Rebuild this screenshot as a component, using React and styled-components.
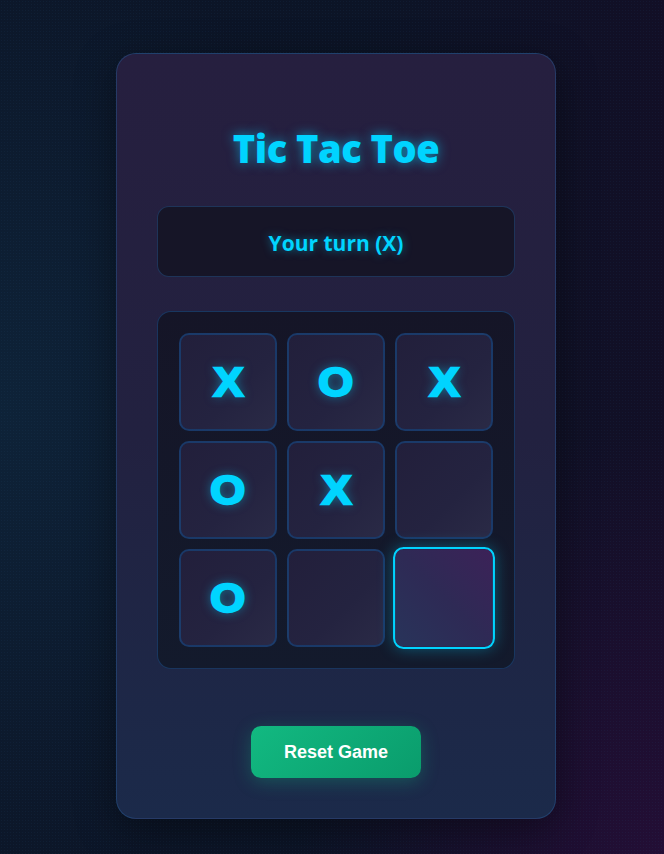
import React from "react";
import styled, { createGlobalStyle } from "styled-components";

const GlobalStyle = createGlobalStyle`
  html, body {
    margin: 0;
    padding: 0;
    min-height: 100%;
  }
  body {
    background:
      radial-gradient(rgba(40, 90, 140, 0.1) 1px, transparent 1px) 0 0 / 3px 3px,
      radial-gradient(ellipse 60% 55% at 0% 48%, rgba(14, 36, 58, 0.9), transparent 100%),
      radial-gradient(ellipse 55% 50% at 100% 100%, rgba(36, 14, 54, 0.95), transparent 100%),
      linear-gradient(90deg, #0c1628 0%, #0c1426 55%, #120f26 100%);
    font-family: "Open Sans", "Noto Sans", sans-serif;
  }
`;

const Page = styled.div`
  min-height: 854px;
  box-sizing: border-box;
  padding: 53px 0 0 8px;
  display: flex;
  justify-content: center;
  align-items: flex-start;
`;

const Card = styled.div`
  width: 440px;
  box-sizing: border-box;
  padding: 40px;
  border-radius: 20px;
  border: 1px solid rgba(40, 90, 150, 0.45);
  background: linear-gradient(180deg, #261f3f 0%, #222140 50%, #1b2a4a 100%);
  box-shadow: 0 10px 40px rgba(0, 0, 0, 0.4);
  display: flex;
  flex-direction: column;
  align-items: stretch;
`;

const Title = styled.h1`
  margin: 30px 0 34px;
  text-align: center;
  font-family: "Open Sans", sans-serif;
  font-weight: 800;
  font-size: 38px;
  line-height: 48px;
  letter-spacing: -0.5px;
  color: #00d4ff;
  text-shadow: 0 0 12px rgba(0, 212, 255, 0.6);
`;

const Status = styled.div`
  height: 71px;
  box-sizing: border-box;
  border-radius: 12px;
  border: 1px solid rgba(40, 90, 150, 0.45);
  background: #161527;
  display: flex;
  align-items: center;
  justify-content: center;
  padding-top: 3px;
  font-family: "Open Sans", sans-serif;
  font-weight: 700;
  font-size: 21px;
  color: #00d4ff;
  text-shadow: 0 0 8px rgba(0, 212, 255, 0.5);
`;

const Board = styled.div`
  margin-top: 34px;
  box-sizing: border-box;
  padding: 21px;
  border-radius: 14px;
  border: 1px solid rgba(30, 80, 140, 0.55);
  background: linear-gradient(180deg, #151527 0%, #131a2c 100%);
  display: grid;
  grid-template-columns: repeat(3, 1fr);
  gap: 10px;
`;

const Cell = styled.div`
  aspect-ratio: 1 / 1;
  box-sizing: border-box;
  border-radius: 10px;
  border: ${(p) => (p.$active ? "2px solid #00d4ff" : "2px solid rgba(22, 70, 128, 0.65)")};
  background: ${(p) =>
    p.$active
      ? "linear-gradient(45deg, #28345a 0%, #2e2a55 50%, #3c2258 100%)"
      : "linear-gradient(135deg, #221f3b 0%, #242340 60%, #2a2a46 100%)"};
  box-shadow: ${(p) => (p.$active ? "0 0 14px rgba(0, 212, 255, 0.35)" : "none")};
  transform: ${(p) => (p.$active ? "scale(1.04)" : "none")};
  display: flex;
  align-items: center;
  justify-content: center;
`;

const Mark = styled.span`
  display: inline-block;
  transform: scaleX(1.12);
  font-family: "Liberation Sans", Arial, sans-serif;
  font-weight: 700;
  font-size: 40px;
  color: #00d4ff;
  -webkit-text-stroke: 2.4px #00d4ff;
  text-shadow: 0 0 10px rgba(0, 212, 255, 0.6);
`;

const Footer = styled.div`
  margin-top: 57px;
  display: flex;
  justify-content: center;
`;

const ResetButton = styled.button`
  width: 170px;
  height: 52px;
  border: none;
  border-radius: 10px;
  background: linear-gradient(135deg, #12b981 0%, #0a9c6c 100%);
  box-shadow: 0 4px 18px rgba(16, 185, 129, 0.3);
  color: #fff;
  font-family: "Liberation Sans", Arial, sans-serif;
  font-weight: 700;
  font-size: 18px;
  cursor: pointer;
`;

const board = ["X", "O", "X", "O", "X", "", "O", "", ""];

export default function App() {
  return (
    <>
      <GlobalStyle />
      <Page>
        <Card>
          <Title>Tic Tac Toe</Title>
          <Status>Your turn (X)</Status>
          <Board>
            {board.map((v, i) => (
              <Cell key={i} $active={i === 8}>
                {v && <Mark>{v}</Mark>}
              </Cell>
            ))}
          </Board>
          <Footer>
            <ResetButton>Reset Game</ResetButton>
          </Footer>
        </Card>
      </Page>
    </>
  );
}
